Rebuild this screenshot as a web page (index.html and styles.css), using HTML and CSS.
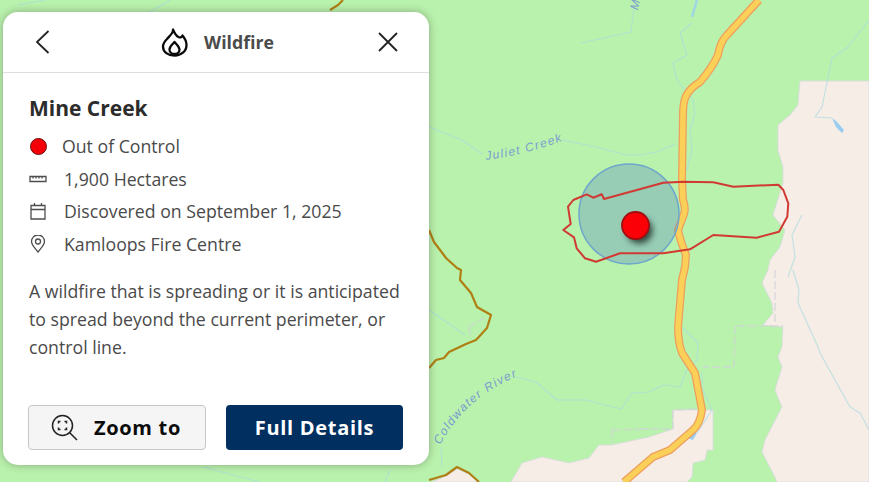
FILE: index.html
```html
<!DOCTYPE html>
<html lang="en">
<head>
<meta charset="utf-8">
<title>Wildfire</title>
<link rel="stylesheet" href="styles.css">
</head>
<body>
<div class="map">
<svg class="map-art" viewBox="0 0 869 482" width="869" height="482" xmlns="http://www.w3.org/2000/svg">
  <rect class="land" width="869" height="482"/>
  <g class="soft">
  <path class="beige" d="M800 81L869 81L869 482L777 482L775 477L762 452L765 440L782 407L775 390L782 367L778 357L782 347L783 327L763 325L773 313L772 303L762 283L768 270L770 260L780 247L785 230L773 215L783 183L783 167L778 150L778 125L790 115L798 105Z"/>
  <path class="beige" d="M673 410L713 410L713 450L707 450L705 460L693 463L692 477L687 482L511 482L522 463L542 457L569 463L589 458L599 445L612 445L649 437L673 429Z"/>
  <path class="beige" d="M432 482L446 476L457 469L469 474L478 482Z"/>
  <path class="dash" d="M775 270L775 325M737 326L783 326M735 326L734 367L703 367M612 430L649 429M612 430L612 443M640 429L673 429M673 429L673 410L695 409M469 327L484 318M469 327L470 335"/>
  <path class="river" d="M429 127L462 140L482 154M562 140L596 147L626 155L640 155L657 152L675 144M581 43L631 32L634 7M516 377L536 382L557 400L586 400L621 409L632 393L649 392L663 385L680 387L687 370L697 360L698 343L683 328M702 373L702 387L712 410L697 433M692 23L680 33L687 55L673 63L677 80L693 100L695 113L690 130L692 150L687 170M869 20L847 48L832 58L822 107L815 117L832 118M793 270L799 290L798 303L818 347L820 353L850 407L860 413L869 430M802 215L792 235L795 257L788 277M429 310L465 335M441 447L442 467M18 5L45 0M150 12L170 0M203 467L260 482M390 470L385 482"/>
  <path class="stream" d="M697 0L692 17"/>
  <path class="lake" d="M832 118L837 122L844 130L842 133L836 127ZM692 430L697 433L693 440L687 438Z"/>
  <path class="brown" d="M429 230L434 242L446 258L457 268L461 270L460 280L471 293L477 307L491 315L487 328L476 340L466 344L449 352L444 358L436 360L429 368M343 0L338 5L330 10M429 480L446 475L457 467L469 473L479 482"/>
  <path class="road-edge" d="M759 0L727 35Q720 42 718 55Q712 68 700 82Q690 88 686 96Q683 102 683 115L682 180L683 200Q686 208 684 214L678 230Q680 240 686 255L685 267L682 280L678 327Q678 342 682 353L695 373L702 410Q700 424 693 430L670 450L653 457L624 482"/>
  <path class="road" d="M759 0L727 35Q720 42 718 55Q712 68 700 82Q690 88 686 96Q683 102 683 115L682 180L683 200Q686 208 684 214L678 230Q680 240 686 255L685 267L682 280L678 327Q678 342 682 353L695 373L702 410Q700 424 693 430L670 450L653 457L624 482"/>
  </g>
  <path id="juliet" class="label-path" d="M486 160Q525 155 568 139"/>
  <path id="coldwater" class="label-path" d="M440 445Q466 397 518 376"/>
  <text class="map-label"><textPath href="#juliet">Juliet Creek</textPath></text>
  <text class="map-label"><textPath href="#coldwater">Coldwater River</textPath></text>
  <text class="map-label" transform="translate(638 10.500) rotate(-78)">M</text>
  <circle class="buffer" cx="629" cy="214" r="50"/>
  <path class="perimeter" d="M563.3 230L570.7 224L568 206.7L573.3 200L586.7 194.3L593.3 197.7L601.7 194.3L604 199L663.3 182.7L683.3 181.7L713.3 182.3L733.3 186.7L778.3 184.7L783.3 190L788.3 203.3L787.3 216.7L779 231.7L756.7 237.7L713.3 235L690 249.3L663.3 253.3L620 253.3L596 261.7L585 258.3L576.7 248.3L574 237.3Z"/>
  <circle class="pin-shadow" cx="639.500" cy="230.500" r="13"/>
  <circle class="pin" cx="635.5" cy="225.5" r="13.5"/>
</svg>

<aside class="panel">
  <header class="panel-head">
    <button class="icon-btn" aria-label="Back">
      <svg width="24" height="24" viewBox="0 0 24 24"><path class="line" d="M17.5 1L6 12L17.5 23"/></svg>
    </button>
    <div class="head-title">
      <svg class="flame" width="30" height="30" viewBox="0 0 30 30"><path class="flame-line" d="M13 2.500C13.500 6 9.500 9 7 12C4.500 14.500 3 16.500 3 19.500C3 25 8 28.500 14.500 28.500C21 28.500 26.500 24.500 26.500 18C26.500 14.500 25 11.500 22.500 8.500C22 10 20.500 11 18.500 10C16 9 14.500 6 13 2.500Z"/><path class="flame-line" d="M14.500 15C13 17 9.500 19 9.500 22.500C9.500 25 11.500 27 14.500 27C17.500 27 19.500 25 19.500 22.500C19.500 19.500 16.500 17.500 14.500 15Z"/></svg>
      <span>Wildfire</span>
    </div>
    <button class="icon-btn" aria-label="Close">
      <svg width="24" height="24" viewBox="0 0 24 24"><path class="line" d="M3 3L21 21M21 3L3 21"/></svg>
    </button>
  </header>
  <div class="panel-body">
    <h1>Mine Creek</h1>
    <ul class="facts">
      <li class="fact fact-status"><span class="status-dot"></span>Out of Control</li>
      <li class="fact">
        <svg class="fact-icon" width="18" height="18" viewBox="0 0 18 18"><path class="thin" d="M1 6.500H17V11.500H1ZM4 6.500V8.500M7 6.500V8.500M10 6.500V8.500M13 6.500V8.500"/></svg>
        1,900 Hectares</li>
      <li class="fact">
        <svg class="fact-icon" width="18" height="18" viewBox="0 0 18 18"><path class="thin" d="M2 3.500H16V17H2ZM2 7.500H16M5.500 1V4M12.500 1V4"/></svg>
        Discovered on September 1, 2025</li>
      <li class="fact">
        <svg class="fact-icon" width="18" height="18" viewBox="0 0 18 18"><path class="thin" d="M9 17C6 13 2.500 10 2.500 6.500A6.500 6.500 0 0 1 15.500 6.500C15.500 10 12 13 9 17Z"/><circle class="thin" cx="9" cy="6.500" r="2.500"/></svg>
        Kamloops Fire Centre</li>
    </ul>
    <p class="desc">A wildfire that is spreading or it is anticipated to spread beyond the current perimeter, or control line.</p>
    <div class="actions">
      <button class="btn btn-light">
        <svg width="28" height="28" viewBox="0 0 28 28"><circle class="zoom-line" cx="11.500" cy="11.500" r="10"/><path class="zoom-line" d="M18.500 18.500L26 26M7.500 9.500V7.500H9.500M13.500 7.500H15.500V9.500M15.500 13.500V15.500H13.500M9.500 15.500H7.500V13.500"/></svg>
        Zoom to
      </button>
      <button class="btn btn-dark">Full Details</button>
    </div>
  </div>
</aside>
</div>
</body>
</html>
```

FILE: styles.css
```css
* { box-sizing: border-box; }
html, body { margin: 0; padding: 0; height: 100%; }
body { font-family: "Open Sans", "Noto Sans", sans-serif; overflow: hidden; }

.map { position: relative; width: 869px; height: 482px; overflow: hidden; background: #b9f2ac; }
.map-art { position: absolute; inset: 0; display: block; }

.land { fill: #b9f2ac; }
.soft { filter: blur(.5px); }
.beige { fill: #f5ede6; stroke: #dcd9e2; stroke-width: .8; }
.dash { fill: none; stroke: #d2d2da; stroke-opacity: .8; stroke-width: 1.300; stroke-dasharray: 8 3; }
.river { fill: none; stroke: #a9dce0; stroke-opacity: .7; stroke-width: 1.100; stroke-linejoin: round; }
.stream { fill: none; stroke: #9fd6e6; stroke-width: 2.500; }
.lake { fill: #97cdf0; }
.brown { fill: none; stroke: #b07f14; stroke-width: 2.200; stroke-linejoin: round; }
.road-edge { fill: none; stroke: #ee9f5d; stroke-width: 8; stroke-linejoin: round; }
.road { fill: none; stroke: #fbd058; stroke-width: 5.500; stroke-linejoin: round; }
.label-path { fill: none; }
.map-label { font: italic 12px "Liberation Sans", sans-serif; letter-spacing: 1.400px; fill: #7c9dd0; }
.buffer { fill: #6a98c0; fill-opacity: .42; stroke: #6fa6cc; stroke-width: 1.500; }
.perimeter { fill: none; stroke: #d13a33; stroke-width: 2; stroke-linejoin: round; }
.pin-shadow { fill: #1c2e26; fill-opacity: .85; filter: blur(3px); }
.pin { fill: #fb0007; stroke: #a30d10; stroke-width: 1.800; }

.panel {
  position: absolute; left: 3px; top: 12px; width: 426px; height: 453px;
  background: #fff; border-radius: 15px;
  box-shadow: 0 0 9px rgba(60, 60, 60, .4);
  display: flex; flex-direction: column;
}
.panel-head {
  flex: none; height: 61px; padding: 0 29px 0 28px;
  display: flex; align-items: center; justify-content: space-between;
  border-bottom: 1px solid #dedede;
}
.icon-btn { width: 24px; height: 24px; padding: 0; border: 0; background: none; display: block; }
.icon-btn svg { display: block; }
.line { fill: none; stroke: #222; stroke-width: 1.800; }
.head-title { display: flex; align-items: center; gap: 14px; font-size: 17.700px; font-weight: 700; color: #4b4b4b; margin-left: 3px; }
.flame { display: block; }
.flame-line { fill: none; stroke: #0a0a0a; stroke-width: 2.300; stroke-linejoin: round; }

.panel-body { flex: 1; padding: 20px 26px 15px 25px; display: flex; flex-direction: column; min-height: 0; }
h1 { margin: 0 0 7px; padding-left: 1px; font-size: 21px; line-height: 30px; font-weight: 700; color: #2c2c2c; }
.facts { list-style: none; margin: 0; padding: 0; display: flex; flex-direction: column; }
.fact { height: 32.500px; display: flex; align-items: center; gap: 17px; font-size: 17.700px; color: #4a4a4a; }
.fact-icon { flex: none; display: block; margin-left: 1px; }
.fact-status { gap: 15px; }
.status-dot { flex: none; width: 17px; height: 17px; margin-left: 2px; border-radius: 50%; background: #f40008; border: 1px solid #6b0b0b; }
.thin { fill: none; stroke: #4d4d4d; stroke-width: 1.300; }
.desc { margin: 17px 0 0; padding-left: 1px; font-size: 17.700px; line-height: 28px; color: #4a4a4a; }
.actions { margin-top: auto; display: flex; gap: 20px; }
.btn { height: 45px; padding: 0; border-radius: 4px; font-family: inherit; font-size: 20px; font-weight: 700; letter-spacing: .7px; display: flex; align-items: center; justify-content: center; }
.btn-light { flex: 0 0 178px; background: #f5f5f5; border: 1px solid #c6c6c6; color: #0b0b0b; gap: 15px; }
.btn-light svg { display: block; margin-left: -2px; }
.zoom-line { fill: none; stroke: #222; stroke-width: 1.500; }
.btn-dark { flex: 1; background: #002f60; border: 0; color: #fff; }
```
